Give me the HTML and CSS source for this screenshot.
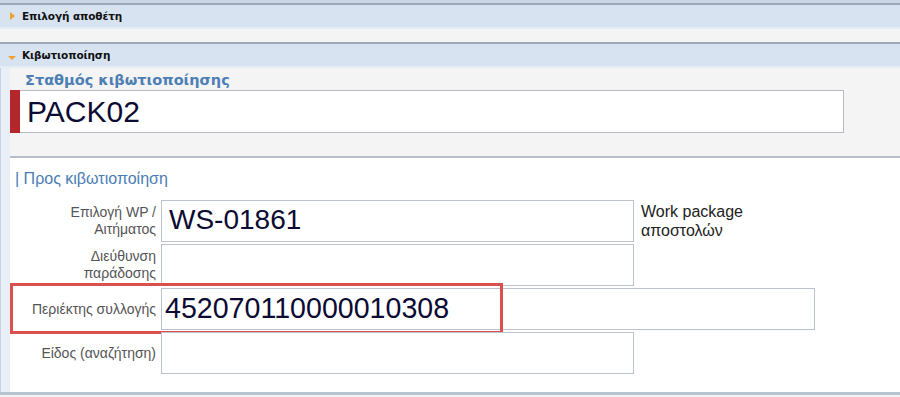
FILE: index.html
```html
<!DOCTYPE html>
<html lang="el">
<head>
<meta charset="utf-8">
<title>Κιβωτιοποίηση</title>
<link rel="stylesheet" href="styles.css">
</head>
<body>
<div class="topstrip"></div>
<div class="panel-header"><span class="tri tri-right"></span><span class="ph-title">Επιλογή αποθέτη</span></div>
<div class="collapsed"></div>
<div class="panel-header"><span class="tri tri-down"></span><span class="ph-title">Κιβωτιοποίηση</span></div>
<div class="panel-body">
  <div class="side"></div>
  <div class="main">
    <section class="station">
      <div class="station-title">Σταθμός κιβωτιοποίησης</div>
      <div class="station-box">
        <div class="req-bar"></div>
        <div class="station-input">PACK02</div>
      </div>
    </section>
    <section class="form">
      <div class="form-title">| Προς κιβωτιοποίηση</div>
      <div class="rows">
        <div class="row">
          <div class="label">Επιλογή WP /<br>Αιτήματος</div>
          <div class="input">WS-01861</div>
          <div class="hint">Work package<br>αποστολών</div>
        </div>
        <div class="row">
          <div class="label">Διεύθυνση<br>παράδοσης</div>
          <div class="input"></div>
        </div>
        <div class="row">
          <div class="label">Περιέκτης συλλογής</div>
          <div class="input wide">452070110000010308</div>
          <div class="highlight"></div>
        </div>
        <div class="row">
          <div class="label">Είδος (αναζήτηση)</div>
          <div class="input"></div>
        </div>
      </div>
    </section>
  </div>
</div>
<div class="bottomline"></div>
</body>
</html>
```
FILE: styles.css
```css
html, body {
  margin: 0;
  padding: 0;
}
body {
  width: 900px;
  height: 397px;
  overflow: hidden;
  background: #f4f4f4;
  font-family: "Liberation Sans", Arial, sans-serif;
}
.topstrip {
  height: 3px;
  background: #cad6e6;
}
.panel-header {
  height: 22px;
  border-top: 2px solid #9ca8b8;
  border-bottom: 2px solid #e4ecf6;
  background: #d7e3f1;
  display: flex;
  align-items: center;
  box-sizing: content-box;
}
.ph-title {
  font-family: "DejaVu Sans", Tahoma, sans-serif;
  font-weight: bold;
  font-size: 10.5px;
  color: #111;
  letter-spacing: -0.1px;
}
.tri {
  display: inline-block;
  width: 0;
  height: 0;
}
.tri-right {
  margin-left: 10px;
  margin-right: 7px;
  border-top: 4.5px solid transparent;
  border-bottom: 4.5px solid transparent;
  border-left: 5px solid #f2a12e;
}
.tri-down {
  margin-left: 8px;
  margin-right: 6px;
  margin-top: 6px;
  border-left: 4.5px solid transparent;
  border-right: 4.5px solid transparent;
  border-top: 4px solid #f2a12e;
}
.collapsed {
  height: 13px;
  background: #f4f4f4;
}
.panel-body {
  display: flex;
  height: 324px;
}
.side {
  width: 10px;
  flex: none;
  background: #e9eef7;
  border-left: 1px solid #c7d3e5;
  box-sizing: border-box;
}
.main {
  flex: 1;
  display: flex;
  flex-direction: column;
  min-width: 0;
}
.station {
  background: #f4f4f4;
  padding-top: 2px;
  height: 86px;
  border-bottom: 2px solid #b6bec9;
}
.station-title {
  padding-left: 15px;
  font-family: "DejaVu Sans", Tahoma, sans-serif;
  font-weight: bold;
  font-size: 14.5px;
  color: #4d7fb4;
  height: 20px;
  line-height: 20px;
}
.station-box {
  display: flex;
  width: 834px;
  height: 43px;
}
.req-bar {
  width: 10px;
  background: #b3262a;
}
.station-input {
  flex: 1;
  background: #fff;
  border: 1px solid #b8bcc2;
  border-left: none;
  font-size: 30px;
  color: #0b0b33;
  padding-left: 7px;
  line-height: 41px;
}
.form {
  flex: 1;
  background: #fff;
}
.form-title {
  padding-left: 5px;
  margin-top: 11px;
  font-size: 16px;
  color: #4a7db4;
  height: 20px;
  line-height: 20px;
}
.rows {
  margin-top: 11px;
  display: flex;
  flex-direction: column;
  gap: 2px;
}
.row {
  position: relative;
  display: flex;
  align-items: flex-start;
  height: 42px;
}
.label {
  width: 146px;
  flex: none;
  text-align: right;
  font-size: 14px;
  line-height: 17px;
  color: #555;
  align-self: center;
}
.input {
  margin-left: 5px;
  width: 473px;
  height: 42px;
  box-sizing: border-box;
  background: #fff;
  border: 1px solid #bcc3cf;
  font-size: 28px;
  color: #0b0b33;
  padding-left: 7px;
  line-height: 38px;
}
.input.wide {
  width: 654px;
  font-size: 28.6px;
  padding-left: 3px;
}
.hint {
  margin-left: 7px;
  margin-top: 2px;
  font-size: 16px;
  line-height: 19px;
  color: #222;
}
.highlight {
  position: absolute;
  left: 0;
  top: -5px;
  width: 493px;
  height: 51px;
  box-sizing: border-box;
  border: 3px solid #d9504f;
}
.bottomline {
  height: 3px;
  background: #b8c3d2;
}
```
